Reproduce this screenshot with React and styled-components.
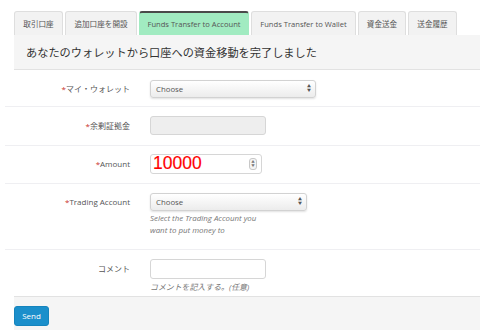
import React from "react";
import styled, { createGlobalStyle } from "styled-components";

const GlobalStyle = createGlobalStyle`
  body {
    margin: 0;
    background: #ffffff;
    font-family: "Open Sans", "Noto Sans CJK JP", sans-serif;
    color: #555;
  }
`;

const Page = styled.div`
  width: 480px;
  height: 330px;
  padding-top: 11px;
  box-sizing: border-box;
  overflow: hidden;
`;

const Tabs = styled.ul`
  display: flex;
  gap: 2px;
  margin: 0 0 0 14px;
  padding: 0;
  list-style: none;
`;

const Tab = styled.li`
  width: ${({ w }) => w}px;
  height: 24px;
  box-sizing: border-box;
  display: flex;
  align-items: center;
  justify-content: center;
  font-size: 7.6px;
  color: #555;
  background: ${({ active }) => (active ? "#a1ebc1" : "#f2f2f2")};
  border: 1px solid ${({ active }) => (active ? "#a1ebc1" : "#dedede")};
  border-top: ${({ active }) => (active ? "2px solid #4a4a4a" : "1px solid #dedede")};
  border-bottom: none;
  border-radius: 3px 3px 0 0;
  white-space: nowrap;
`;

const Header = styled.div`
  margin-left: 14px;
  height: 34px;
  background: #f5f5f5;
  border-bottom: 1px solid #e2e2e2;
  display: flex;
  align-items: center;
  padding-left: 12px;
`;

const Title = styled.h2`
  margin: 0;
  font-size: 11.2px;
  font-weight: normal;
  color: #333;
`;

const Form = styled.div`
  padding-left: 5px;
`;

const Row = styled.div`
  display: grid;
  grid-template-columns: 125px 1fr;
  column-gap: 20px;
  align-items: start;
  padding: ${({ pad }) => pad};
  border-bottom: ${({ last }) => (last ? "none" : "1px solid #efeff2")};
`;

const Label = styled.div`
  text-align: right;
  font-size: 8px;
  color: #555;
  height: ${({ h }) => h || 19}px;
  line-height: ${({ h }) => h || 19}px;
  white-space: nowrap;
`;

const Star = styled.span`
  color: #c9302c;
`;

const Field = styled.div`
  display: flex;
  flex-direction: column;
`;

const SelectBox = styled.div`
  width: ${({ w }) => w}px;
  height: 18px;
  box-sizing: border-box;
  border: 1px solid #d2d2d2;
  border-radius: 3px;
  background: linear-gradient(#ffffff, #ececec);
  box-shadow: 0 1px 2px rgba(0, 0, 0, 0.12);
  display: flex;
  align-items: center;
  justify-content: space-between;
  padding: 0 4px 0 5px;
  font-size: 7.8px;
  color: #555;
`;

const Arrows = styled.span`
  display: flex;
  flex-direction: column;
  font-size: 4px;
  line-height: 4px;
  color: #555;
`;

const TextInput = styled.div`
  width: ${({ w }) => w}px;
  height: ${({ h }) => h || 20}px;
  box-sizing: border-box;
  border: 1px solid #d6d6d6;
  border-radius: 3px;
  background: ${({ disabled }) => (disabled ? "#eeeeee" : "#ffffff")};
  display: flex;
  align-items: center;
  justify-content: space-between;
  padding: 0 4px 0 2px;
`;

const AmountText = styled.span`
  font-family: "Liberation Sans", Arial, sans-serif;
  font-size: 17.5px;
  color: #ff0000;
  line-height: 1;
  -webkit-text-stroke: 0.15px #ff0000;
`;

const Spinner = styled.span`
  width: 6px;
  height: 10px;
  border: 1px solid #c8c8c8;
  border-radius: 3px;
  background: #f4f4f4;
  display: flex;
  flex-direction: column;
  align-items: center;
  justify-content: center;
  font-size: 3.5px;
  line-height: 4px;
  color: #777;
`;

const Help = styled.div`
  margin-top: ${({ mt }) => mt || 1}px;
  font-size: 7.9px;
  line-height: 12px;
  font-style: italic;
  color: #777;
  width: 118px;
`;

const Footer = styled.div`
  margin-left: 14px;
  height: 40px;
  background: #f5f5f5;
  border-top: 1px solid #e2e2e2;
  padding-top: 5px;
  box-sizing: border-box;
`;

const SendButton = styled.button`
  width: 35px;
  height: 20px;
  padding: 0;
  border: 1px solid #1584bd;
  border-radius: 3px;
  background: #1b8fcb;
  color: #ffffff;
  font-family: "Open Sans", sans-serif;
  font-size: 8px;
`;

const tabs = [
  { label: "取引口座", w: 49 },
  { label: "追加口座を開設", w: 72 },
  { label: "Funds Transfer to Account", w: 110, active: true },
  { label: "Funds Transfer to Wallet", w: 105 },
  { label: "資金送金", w: 48 },
  { label: "送金履歴", w: 49 },
];

const UpDown = ({ as: Wrap = Arrows }) => (
  <Wrap>
    <span>▲</span>
    <span>▼</span>
  </Wrap>
);

export default function App() {
  return (
    <>
      <GlobalStyle />
      <Page>
        <Tabs>
          {tabs.map((t) => (
            <Tab key={t.label} w={t.w} active={t.active}>
              {t.label}
            </Tab>
          ))}
        </Tabs>
        <Header>
          <Title>あなたのウォレットから口座への資金移動を完了しました</Title>
        </Header>
        <Form>
          <Row pad="10px 0 8px">
            <Label h={18}>
              <Star>*</Star>マイ・ウォレット
            </Label>
            <Field>
              <SelectBox w={166}>
                Choose
                <UpDown />
              </SelectBox>
            </Field>
          </Row>
          <Row pad="9px 0 10px">
            <Label h={19}>
              <Star>*</Star>余剰証拠金
            </Label>
            <Field>
              <TextInput w={116} h={19} disabled />
            </Field>
          </Row>
          <Row pad="8px 0 9px">
            <Label h={20}>
              <Star>*</Star>Amount
            </Label>
            <Field>
              <TextInput w={112}>
                <AmountText>10000</AmountText>
                <UpDown as={Spinner} />
              </TextInput>
            </Field>
          </Row>
          <Row pad="9px 0 13px">
            <Label h={18}>
              <Star>*</Star>Trading Account
            </Label>
            <Field>
              <SelectBox w={157}>
                Choose
                <UpDown />
              </SelectBox>
              <Help>Select the Trading Account you want to put money to</Help>
            </Field>
          </Row>
          <Row pad="9px 0 3px" last>
            <Label h={20}>コメント</Label>
            <Field>
              <TextInput w={116} />
              <Help mt={2}>コメントを記入する。(任意)</Help>
            </Field>
          </Row>
        </Form>
        <Footer>
          <SendButton>Send</SendButton>
        </Footer>
      </Page>
    </>
  );
}
